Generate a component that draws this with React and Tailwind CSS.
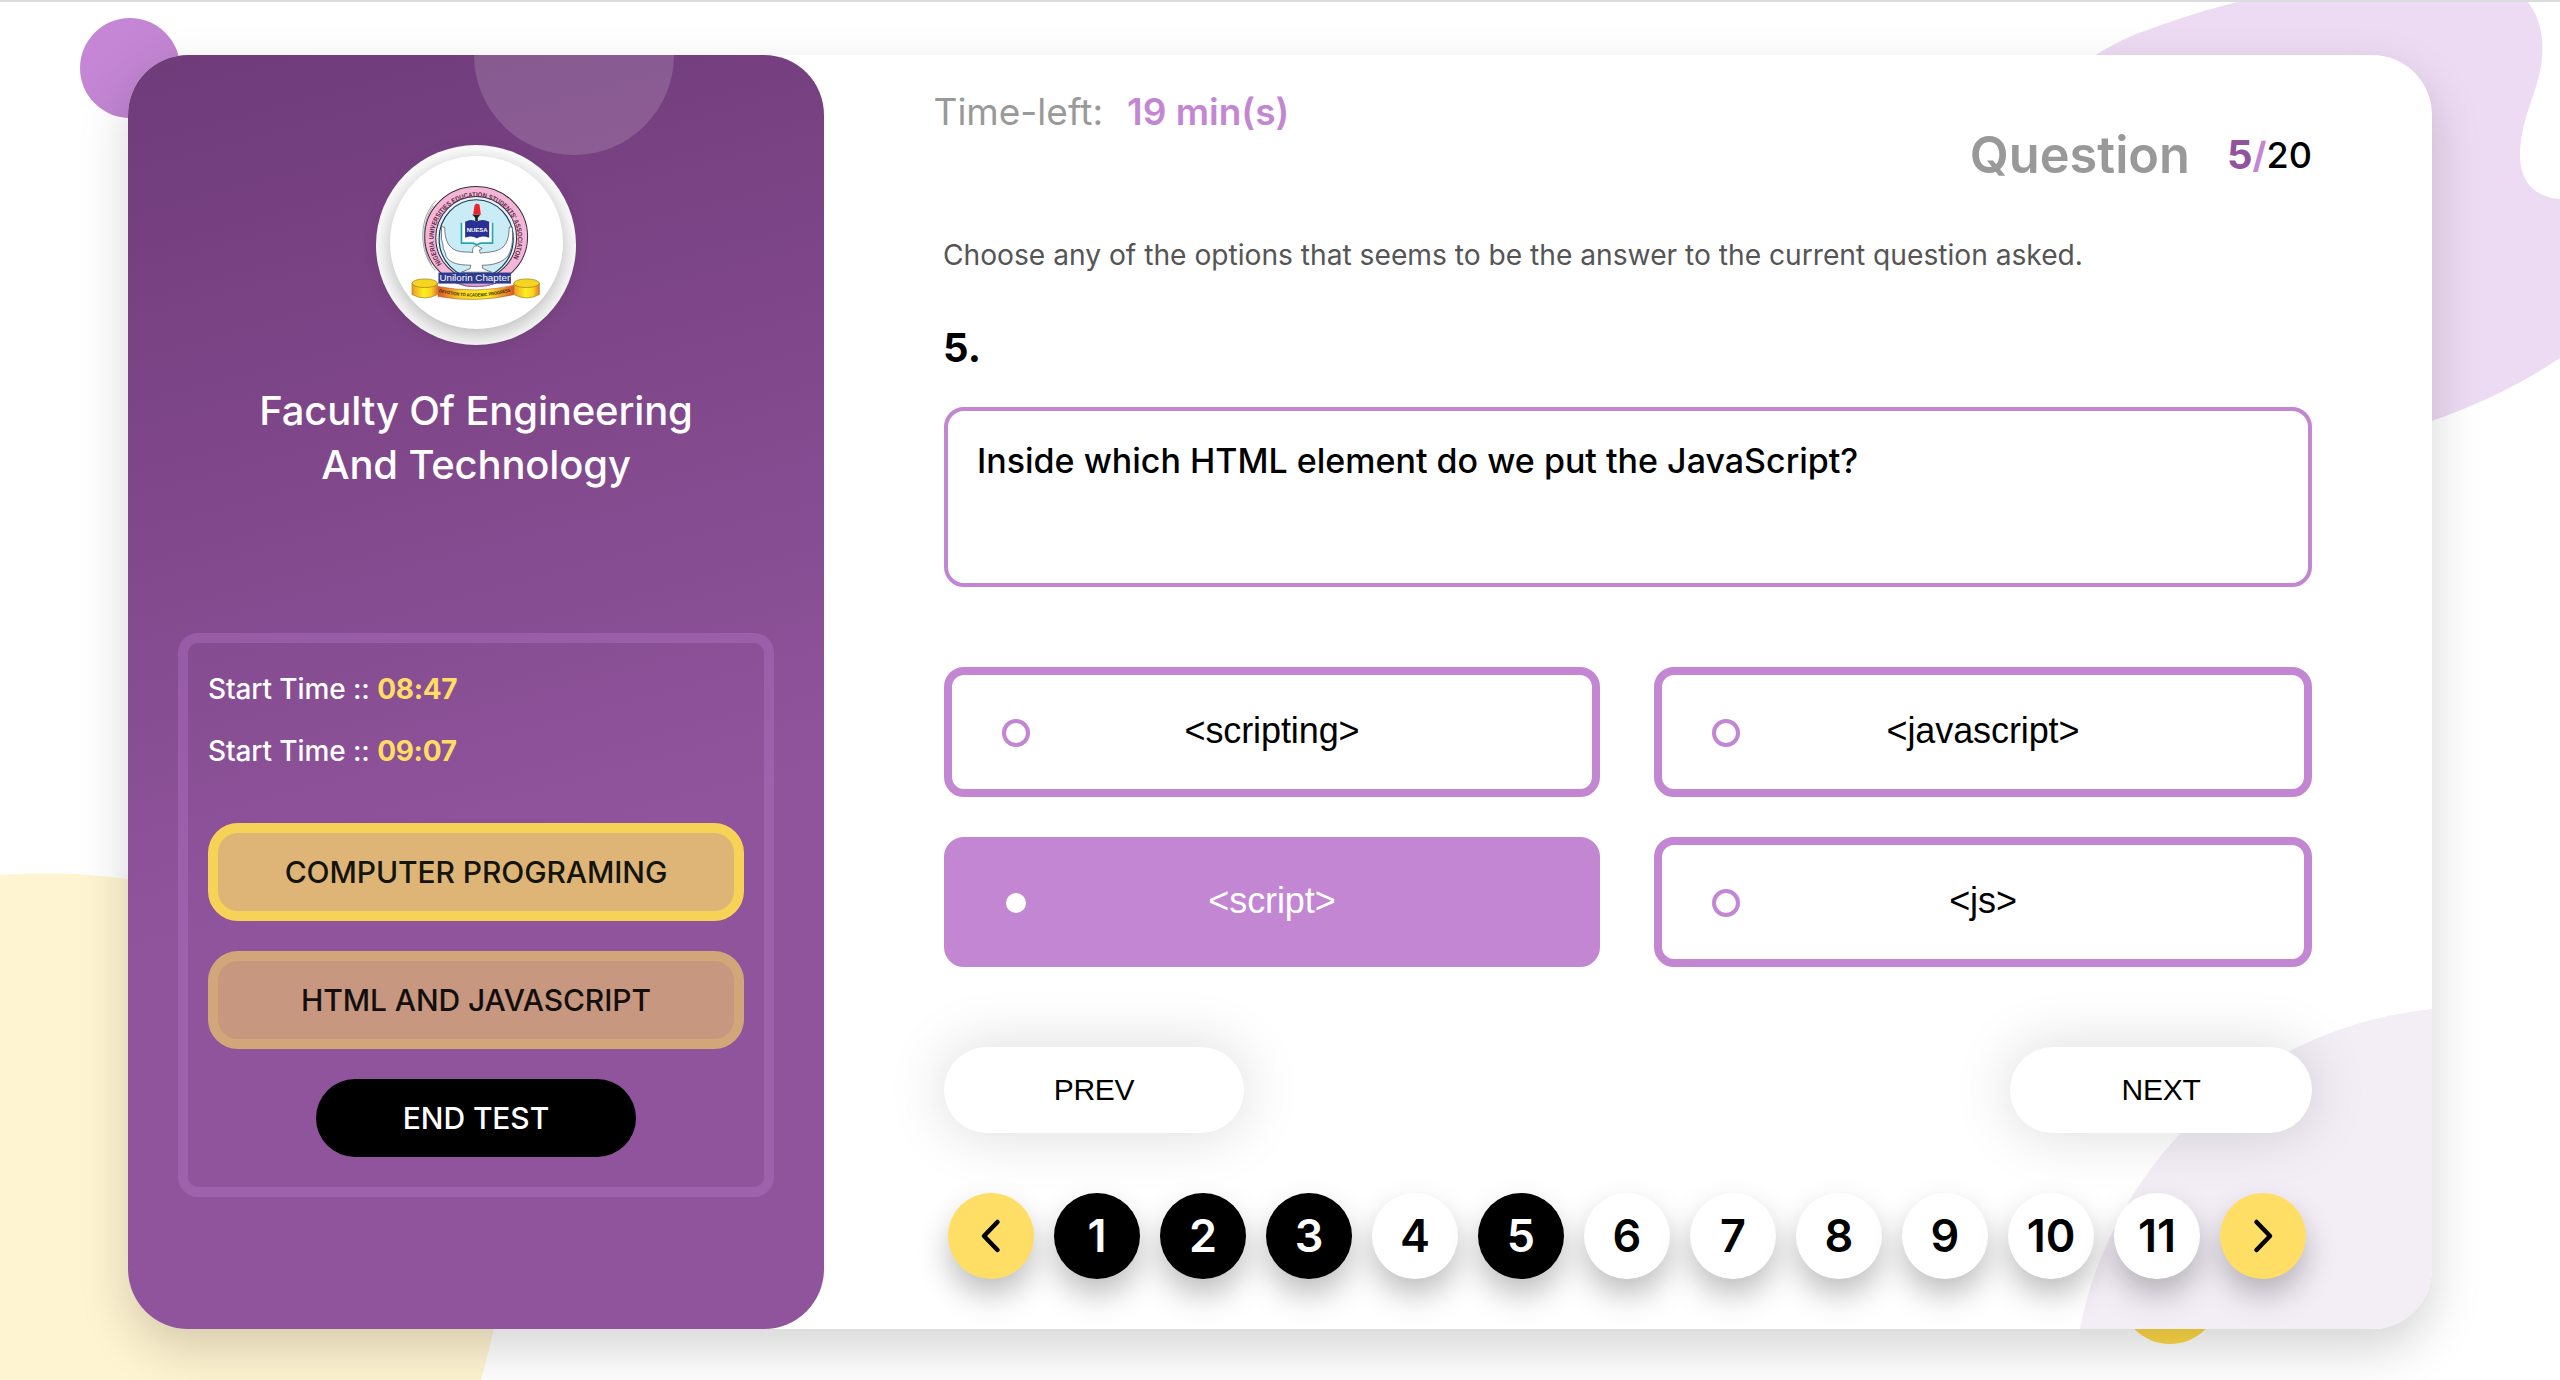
import React from "react";

const options = [
  { label: "<scripting>" },
  { label: "<javascript>" },
  { label: "<script>", selected: true },
  { label: "<js>" },
];

const pages = [
  { n: 1, done: true },
  { n: 2, done: true },
  { n: 3, done: true },
  { n: 4 },
  { n: 5, done: true },
  { n: 6 },
  { n: 7 },
  { n: 8 },
  { n: 9 },
  { n: 10 },
  { n: 11 },
];

function Crest() {
  return (
    <svg viewBox="92 77 518 518" className="h-full w-full">
      <defs>
        <path id="ring" d="M247 400 A126 126 0 1 1 450 400" />
        <path id="motto" d="M238 484 Q350 514 462 480" />
        <linearGradient id="gold" x1="0" x2="1">
          <stop offset="0" stopColor="#ee9a2b" />
          <stop offset="0.45" stopColor="#fdf01f" />
          <stop offset="0.75" stopColor="#fbd41f" />
          <stop offset="1" stopColor="#e8782a" />
        </linearGradient>
        <linearGradient id="sash" x1="0" x2="1">
          <stop offset="0" stopColor="#e2522c" />
          <stop offset="0.3" stopColor="#fbd723" />
          <stop offset="0.65" stopColor="#fdf01f" />
          <stop offset="1" stopColor="#e2522c" />
        </linearGradient>
      </defs>
      <path d="M230 210 C180 260 174 360 228 420 M222 226 C186 275 186 350 216 402" fill="none" stroke="#777" strokeWidth="2" />
      <ellipse cx="350" cy="318" rx="154" ry="150" fill="#f4b6d6" stroke="#3c2c3c" strokeWidth="3" />
      <ellipse cx="350" cy="322" rx="121" ry="124" fill="#e6f3f5" stroke="#3c2c3c" strokeWidth="3" />
      <ellipse cx="350" cy="325" rx="111" ry="117" fill="#c9ecf6" stroke="#1c3a5a" strokeWidth="3.5" />
      <text className="font-['Liberation_Sans'] font-bold" fontSize="20" fill="#5a2a48">
        <textPath href="#ring" textLength="535" lengthAdjust="spacingAndGlyphs">
          NIGERIA UNIVERSITIES EDUCATION STUDENTS' ASSOCIATON
        </textPath>
      </text>
      <path d="M306 277 V338 H341 L352 343 L363 338 H399 V277" fill="#fff" stroke="#2aa5ad" strokeWidth="5" />
      <path d="M317 274 Q336 264 351 274 Q368 264 389 274 V322 Q368 314 352 323 Q336 314 317 322 Z" fill="#2a3192" />
      <path d="M338 252 H363 L355 262 V273 H347 V262 Z" fill="#222" />
      <path d="M341 252 L345 225 L350 219 L360 222 L364 252 Z" fill="#f0232b" />
      <text x="353" y="305" textAnchor="middle" className="font-['Liberation_Sans'] font-bold" fontSize="18" fill="#fff">
        NUESA
      </text>
      <path
        d="M246 288 L256 291 C256 325 264 349 290 360 C308 367 326 363 340 366 C337 352 343 346 354 346 L368 354 L360 358 L362 368 C385 364 412 366 430 350 C447 334 448 310 449 290 L458 290 C461 330 458 355 445 376 C428 397 400 404 368 404 L370 414 L396 425 H306 L332 414 L334 404 C305 403 283 402 266 386 L260 377 L257 366 L252 355 L250 340 L246 325 Z"
        fill="#fff"
        stroke="#444"
        strokeWidth="2"
      />
      <path d="M286 455 Q350 482 414 455 Z" fill="#dba0d2" stroke="#7d5aa0" strokeWidth="2" />
      <path d="M236 468 Q350 490 464 464 V492 Q350 518 236 498 Z" fill="url(#sash)" stroke="#a3481c" strokeWidth="1.5" />
      {[196, 501].map((cx) => (
        <g key={cx} stroke="#9a7a10" strokeWidth="2">
          <path d={`M${cx - 38} 458 V492 Q${cx} 512 ${cx + 38} 492 V458 Z`} fill="url(#gold)" />
          <ellipse cx={cx} cy="458" rx="38" ry="13" fill="#f5d51f" />
        </g>
      ))}
      <rect x="237" y="426" width="217" height="33" fill="#2d3a8e" />
      <text x="346" y="450" textAnchor="middle" textLength="212" lengthAdjust="spacingAndGlyphs" className="font-['Liberation_Sans']" fontSize="26" fill="#fff">
        Unilorin Chapter
      </text>
      <text className="font-['Liberation_Sans'] font-bold" fontSize="14" fill="#3a2a08">
        <textPath href="#motto" textLength="218" lengthAdjust="spacingAndGlyphs">
          DEVOTION TO ACADEMIC PROGRESS
        </textPath>
      </text>
    </svg>
  );
}

function Backdrop() {
  return (
    <svg viewBox="0 0 2560 1380" className="absolute inset-0 h-[1380px] w-[2560px]">
      <defs>
        <linearGradient id="orchid" x1="0" y1="0" x2="1" y2="1">
          <stop offset="0" stopColor="#c688d6" />
          <stop offset="1" stopColor="#c083d0" />
        </linearGradient>
      </defs>
      <circle cx="130" cy="68" r="50" fill="url(#orchid)" />
      <path
        d="M2060 80 C2090 57 2112 44 2136 34 C2175 20 2205 9 2247 0 H2526 C2541 17 2545 40 2541 66 C2536 96 2520 120 2520 157 C2521 184 2536 197 2560 199 V358 C2520 385 2480 404 2432 421 L2300 460 Z"
        fill="#eddaf3"
      />
      <path d="M0 875 C50 872 90 874 128 879 C330 905 510 1080 502 1260 C501 1300 494 1335 481 1380 H0 Z" fill="#fff4d1" />
      <circle cx="2170" cy="1294" r="50" fill="#ffd947" />
    </svg>
  );
}

function Sidebar() {
  return (
    <aside className="relative flex w-[696px] shrink-0 flex-col items-center overflow-hidden rounded-[60px] bg-[linear-gradient(165deg,#6f3b79_0%,#90549c_62%)]">
      <div className="absolute -top-[100px] left-[346px] size-[200px] rounded-full bg-white/15" />
      <div className="relative mt-[90px] size-[200px] shrink-0 rounded-full bg-white px-[13.5px] pt-[11px]">
        <div className="size-[173px] overflow-hidden rounded-full bg-white shadow-[0_6px_24px_rgba(0,0,0,0.3)]">
          <Crest />
        </div>
      </div>
      <h1 className="mt-[39px] text-center text-[40px] leading-[54px] font-medium tracking-[-0.15px] text-white">
        Faculty Of Engineering
        <br />
        And Technology
      </h1>
      <div className="mt-[141px] flex h-[564px] w-[596px] flex-col rounded-[20px] border-10 border-[#b070c2]/45 px-5 pt-[14.5px]">
        <p className="text-[28px] leading-[62px] font-medium tracking-[-0.1px] text-white">
          Start Time :: <span className="font-bold tracking-[-0.3px] text-[#ffdc64]">08:47</span>
        </p>
        <p className="text-[28px] leading-[62px] font-medium tracking-[-0.1px] text-white">
          Start Time :: <span className="font-bold tracking-[-0.3px] text-[#ffdc64]">09:07</span>
        </p>
        <button className="mt-[41.5px] h-[98px] rounded-[30px] border-10 border-[#f6d356] bg-[#deb576] text-[30px] font-medium tracking-[-0.1px] text-[#14140f]">
          COMPUTER PROGRAMING
        </button>
        <button className="mt-[30px] h-[98px] rounded-[30px] border-10 border-[#d1a679] bg-[#c7977f] text-[30px] font-medium tracking-[-0.1px] text-[#140f0f]">
          HTML AND JAVASCRIPT
        </button>
        <button className="mt-[30px] h-[78px] w-[320px] self-center rounded-full bg-black text-[30px] font-medium tracking-[-0.1px] text-white">
          END TEST
        </button>
      </div>
    </aside>
  );
}

function Option({ label, selected }) {
  return (
    <div
      className={
        "grid h-[130px] grid-cols-[28px_1fr_28px] items-center rounded-[20px] border-8 border-[#c386d3] px-[50px] text-center font-['Liberation_Sans'] text-[36px] tracking-[-0.1px] " +
        (selected ? "bg-[#c386d3] text-white" : "bg-white text-black")
      }
    >
      <span className="mt-[2px] flex size-[28px] items-center justify-center rounded-full border-4 border-[#c386d3]">
        {selected && <span className="size-[20px] shrink-0 rounded-full bg-white" />}
      </span>
      <span className="-mt-[3px] leading-[44px]">{label}</span>
    </div>
  );
}

function Arrow({ d }) {
  return (
    <span className="flex size-[86px] items-center justify-center rounded-full bg-[#ffde66] shadow-[0_16px_30px_rgba(0,0,0,0.25)]">
      <svg viewBox="0 0 40 40" className="size-10" fill="none" stroke="#000" strokeWidth="4.5" strokeLinecap="round" strokeLinejoin="round">
        <path d={d} />
      </svg>
    </span>
  );
}

export default function App() {
  return (
    <div className="relative h-[1380px] w-[2560px] overflow-hidden bg-white px-32 pt-[55px] font-['Inter',sans-serif]">
      <Backdrop />
      <div className="absolute inset-x-0 top-0 h-[2px] bg-[#dcdbe0]" />
      <div className="relative flex h-[1274px] rounded-[60px] bg-white shadow-[0_20px_50px_rgba(0,0,0,0.17)]">
        <div className="absolute inset-0 overflow-hidden rounded-[60px]">
          <div className="absolute top-[952px] left-[1944px] size-[800px] rounded-full bg-[#f3eef6]" />
        </div>
        <Sidebar />
        <main className="relative flex flex-1 flex-col px-[120px]">
          <header className="flex h-[140px] items-start justify-between">
            <p className="mt-[36.5px] -ml-[10.5px] flex text-[37px] leading-10 text-[#999]">
              Time-left:
              <span className="ml-[24px] font-semibold text-[#c386d3]">19 min(s)</span>
            </p>
            <p className="mt-[69.5px] flex text-[36px] leading-[60px] font-medium">
              <span className="mr-[37px] text-[50.5px] font-semibold text-[#999]">Question</span>
              <span className="text-[40px] font-bold text-[#90549c]">5</span>
              <span className="font-bold text-[#c386d3]">/</span>
              <span>20</span>
            </p>
          </header>
          <p className="mt-[39.5px] -ml-px text-[28.2px] leading-10 tracking-[-0.015px] text-[#555]">
            Choose any of the options that seems to be the answer to the current question asked.
          </p>
          <p className="mt-[48.5px] -ml-px text-[40px] leading-[50px] font-bold">5.</p>
          <div className="mt-[34px] h-[180px] rounded-[20px] border-4 border-[#c386d3] bg-white pt-[24.5px] pl-[29px] text-[34px] leading-[50px] font-medium">
            Inside which HTML element do we put the JavaScript?
          </div>
          <div className="mt-20 grid grid-cols-[656px_658px] gap-x-[54px] gap-y-10">
            {options.map((o) => (
              <Option key={o.label} {...o} />
            ))}
          </div>
          <div className="mt-20 flex justify-between font-['Liberation_Sans'] text-[30px] tracking-[-0.3px]">
            <button className="h-[86px] w-[300px] rounded-full bg-white pb-[2px] shadow-[0_0_60px_rgba(0,0,0,0.15)]">PREV</button>
            <button className="h-[86px] w-[302px] rounded-full bg-white pb-[2px] shadow-[0_0_60px_rgba(0,0,0,0.15)]">NEXT</button>
          </div>
          <nav className="mt-[60px] ml-1 flex gap-5 text-[45px] font-semibold">
            <Arrow d="M26.5 6 L13 20 L26.5 34" />
            {pages.map(({ n, done }) => (
              <span
                key={n}
                className={
                  "flex size-[86px] items-center justify-center rounded-full shadow-[0_16px_30px_rgba(0,0,0,0.25)] " +
                  (done ? "bg-black text-white" : "bg-white text-black")
                }
              >
                {n}
              </span>
            ))}
            <Arrow d="M13.5 6 L27 20 L13.5 34" />
          </nav>
        </main>
      </div>
    </div>
  );
}
